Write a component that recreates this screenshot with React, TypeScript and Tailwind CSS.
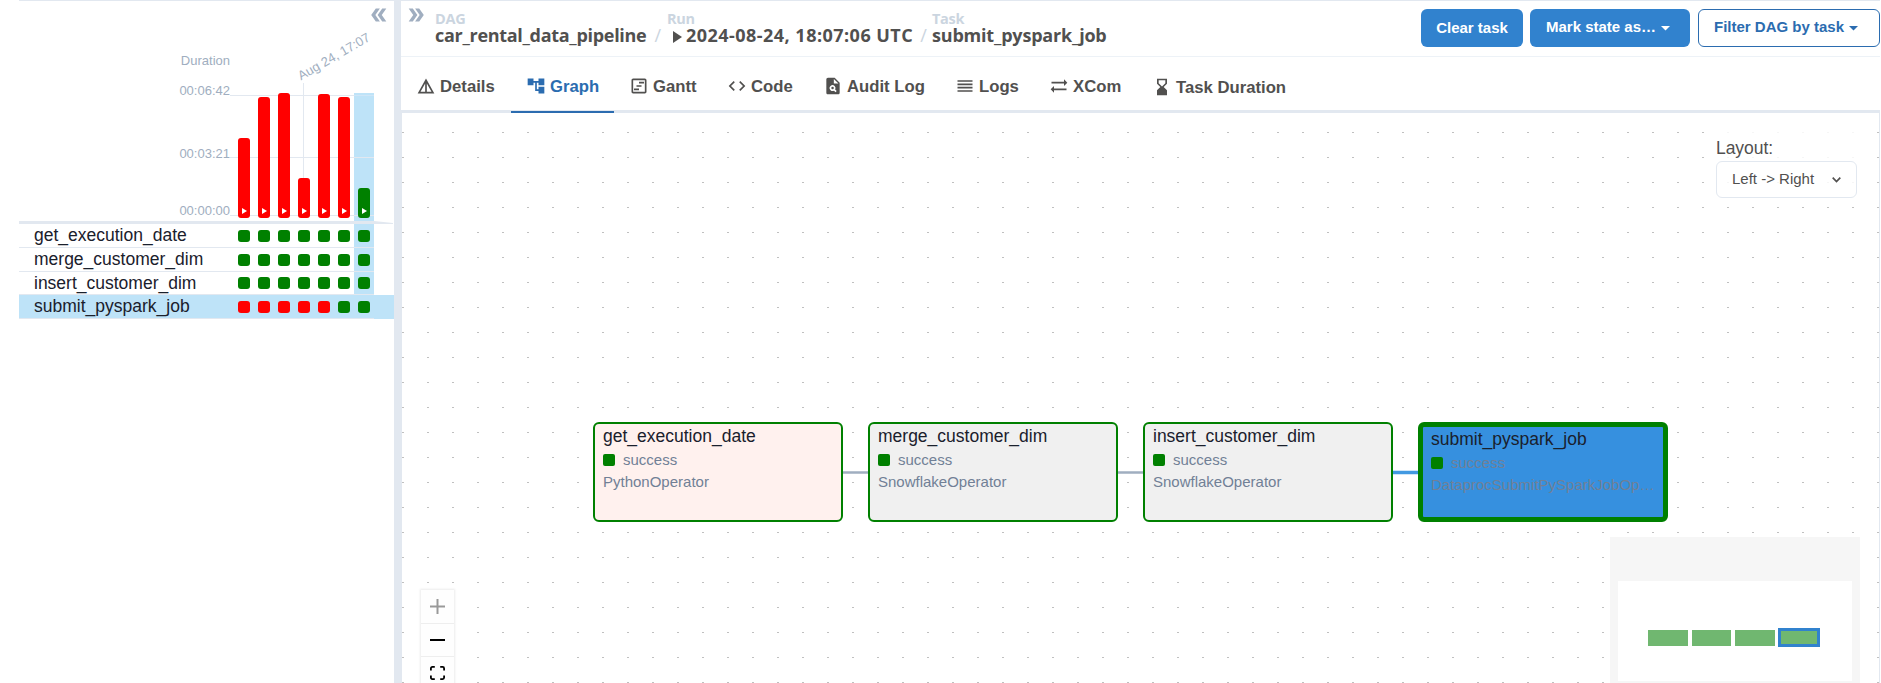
import React from "react";
import {
  MdAccountTree,
  MdCode,
  MdDetails,
  MdDoubleArrow,
  MdHourglassBottom,
  MdOutlineViewTimeline,
  MdPlagiarism,
  MdReorder,
  MdSyncAlt,
} from "react-icons/md";

const runs = [
  { height: 80, color: "bg-[#ff0000]" },
  { height: 121, color: "bg-[#ff0000]" },
  { height: 125, color: "bg-[#ff0000]" },
  { height: 40, color: "bg-[#ff0000]" },
  { height: 124, color: "bg-[#ff0000]" },
  { height: 121, color: "bg-[#ff0000]" },
  { height: 30, color: "bg-[#008000]" },
];

const tasks = [
  { name: "get_execution_date", failed: 0, row: "h-6", selected: false },
  { name: "merge_customer_dim", failed: 0, row: "h-6", selected: false },
  { name: "insert_customer_dim", failed: 0, row: "h-[23px]", selected: false },
  { name: "submit_pyspark_job", failed: 5, row: "h-6", selected: true },
];

const tabs = [
  { label: "Details", Icon: MdDetails, width: "w-[110px]" },
  { label: "Graph", Icon: MdAccountTree, width: "w-[103px]" },
  { label: "Gantt", Icon: MdOutlineViewTimeline, width: "w-[98px]" },
  { label: "Code", Icon: MdCode, width: "w-[96px]" },
  { label: "Audit Log", Icon: MdPlagiarism, width: "w-[132px]" },
  { label: "Logs", Icon: MdReorder, width: "w-[94px]" },
  { label: "XCom", Icon: MdSyncAlt, width: "w-[103px]" },
  { label: "Task Duration", Icon: MdHourglassBottom, width: "w-[142px]" },
];

const nodes = [
  { name: "get_execution_date", operator: "PythonOperator", place: "left-[191px]", fill: "bg-[#fff1ee]", selected: false },
  { name: "merge_customer_dim", operator: "SnowflakeOperator", place: "left-[466px]", fill: "bg-[#f0f0f0]", selected: false },
  { name: "insert_customer_dim", operator: "SnowflakeOperator", place: "left-[741px]", fill: "bg-[#f0f0f0]", selected: false },
  { name: "submit_pyspark_job", operator: "DataprocSubmitPySparkJobOp…", place: "left-[1016px]", fill: "bg-[#3690df]", selected: true },
];

function Caret() {
  return (
    <svg width="9" height="5" viewBox="0 0 9 5" className="ml-[5px] mt-[3px] shrink-0">
      <path d="M0 0h9L4.5 4.5z" fill="currentColor" />
    </svg>
  );
}

function DurationChart() {
  return (
    <div className="relative flex h-[220px] justify-end pr-5 text-[13px] leading-4 text-[#a0aec0]">
      <button className="absolute right-[4px] top-[3px]">
        <MdDoubleArrow className="rotate-180" size={22} />
      </button>
      <div className="flex flex-col items-end pr-[4px] pt-[52px]">
        <span>Duration</span>
        <span className="mt-[14px]">00:06:42</span>
        <span className="mt-[47px]">00:03:21</span>
        <span className="mt-[41px]">00:00:00</span>
      </div>
      <div className="relative flex h-full w-[140px]">
        <div className="absolute -left-[4px] right-0 top-[94px] h-px bg-[#e2e8f0]" />
        <div className="absolute -left-[4px] right-0 top-[156px] h-px bg-[#e2e8f0]" />
        <div className="absolute -left-[4px] right-0 top-[214px] h-px bg-[#e2e8f0]" />
        <div className="absolute left-[69px] top-[82px] h-[100px] w-px bg-[#e2e8f0]" />
        <span className="absolute left-[69px] top-[67px] origin-bottom-left -rotate-[30deg] whitespace-nowrap">
          Aug 24, 17:07
        </span>
        {runs.map((run, i) => (
          <div
            key={i}
            className={`flex w-5 flex-col items-center justify-end pb-[3px] ${i === 6 ? "mt-[92px] bg-[#bee3f8]" : ""}`}
          >
            <div
              className={`relative flex w-3 items-end justify-center rounded-[3px] pb-[4px] ${run.color}`}
              style={{ height: run.height }}
            >
              <svg width="5" height="6" viewBox="0 0 5 6" className="ml-px">
                <path d="M0 0l5 3-5 3z" fill="#fff" />
              </svg>
            </div>
          </div>
        ))}
        <div className="absolute right-0 top-[94px] h-px w-5 bg-[#cfe6f7]" />
      </div>
    </div>
  );
}

function GridPanel() {
  return (
    <aside className="ml-[19px] flex w-[375px] shrink-0 flex-col border-t border-[#e2e8f0]">
      <DurationChart />
      <svg width="375" height="3" viewBox="0 0 375 3" className="shrink-0">
        <path d="M0 0h355l19 2v1H0z" fill="#e2e8f0" />
      </svg>
      {tasks.map((task) => (
        <div
          key={task.name}
          className={`flex shrink-0 ${task.row} ${task.selected ? "bg-[#bee3f8]" : ""}`}
        >
          <div className="flex w-[355px] border-b border-[#e2e8f0]">
            <span className="w-[215px] pl-[15px] text-[17.5px] leading-[23px] text-[#1a202c]">{task.name}</span>
            {runs.map((_, i) => (
              <div
                key={i}
                className={`flex w-5 items-center justify-center ${i === 6 ? "bg-[#bee3f8]" : ""}`}
              >
                <div className={`size-3 rounded-[3px] ${i < task.failed ? "bg-[#ff0000]" : "bg-[#008000]"}`} />
              </div>
            ))}
          </div>
        </div>
      ))}
    </aside>
  );
}

function Header() {
  return (
    <header className="flex h-[56px] shrink-0 border-b border-[#edf2f7] pl-[4px] font-['Open_Sans',sans-serif] font-bold text-[#51504f]">
      <button className="mt-[3px] h-[22px] text-[#a0aec0]">
        <MdDoubleArrow size={22} />
      </button>
      <div className="ml-[8px] flex w-[232px] flex-col pt-[9px]">
        <span className="text-[14.5px] leading-[17px] tracking-[-0.3px] text-[#cbd5e0]">DAG</span>
        <span className="flex whitespace-nowrap text-[18px] leading-[16px]">
          <span className="tracking-[-0.3px]">car_rental_data_pipeline</span>
          <span className="ml-[8px] font-normal text-[#cbd5e0]">/</span>
        </span>
      </div>
      <div className="flex w-[265px] flex-col pt-[9px]">
        <span className="text-[14.5px] leading-[17px] tracking-[-0.3px] text-[#cbd5e0]">Run</span>
        <span className="flex whitespace-nowrap text-[18px] leading-[16px]">
          <svg width="9" height="12" viewBox="0 0 9 12" className="ml-[6px] mr-[4px] mt-[4px]">
            <path d="M0 0l9 6-9 6z" fill="currentColor" />
          </svg>
          <span className="tracking-[0.47px]">2024-08-24, 18:07:06 UTC</span>
          <span className="ml-[7px] font-normal text-[#cbd5e0]">/</span>
        </span>
      </div>
      <div className="flex flex-col pt-[9px]">
        <span className="text-[14.5px] leading-[17px] tracking-[-0.3px] text-[#cbd5e0]">Task</span>
        <span className="text-[18px] leading-[16px] tracking-[-0.2px]">submit_pyspark_job</span>
      </div>
      <div className="ml-auto flex gap-[7px] pt-[8px] font-['Liberation_Sans',Arial,sans-serif] text-[15px]">
        <button className="h-[38px] w-[102px] rounded-md bg-[#3182ce] text-white">Clear task</button>
        <button className="flex h-[38px] w-[160px] items-center rounded-md bg-[#3182ce] pb-[2px] pl-4 text-white">
          Mark state as…
          <Caret />
        </button>
        <button className="ml-px flex h-[38px] w-[182px] items-center rounded-md border border-[#2b6cb0] pb-[2px] pl-[15px] text-[#2b6cb0]">
          Filter DAG by task
          <Caret />
        </button>
      </div>
    </header>
  );
}

function Tabs() {
  return (
    <nav className="flex h-[56px] shrink-0 border-b-[3px] border-[#e2e8f0] text-[16.7px] font-bold text-[#51504f]">
      {tabs.map(({ label, Icon, width }) => (
        <button
          key={label}
          className={`-mb-[3px] flex items-center whitespace-nowrap pl-[15px] ${width} ${
            label === "Graph"
              ? "border-b-2 border-[#2b6cb0] pt-[4px] text-[#2b6cb0]"
              : label === "Task Duration"
                ? "pt-[4px]"
                : "pt-[2px]"
          }`}
        >
          <Icon size={20} className="shrink-0" />
          <span className="ml-[4px] pt-[2px]">{label}</span>
        </button>
      ))}
    </nav>
  );
}

function MiniMap() {
  return (
    <div className="absolute left-[1208px] top-[424px] h-[146px] w-[250px] bg-[#f6f6f6] pl-[8px] pt-[44px]">
      <div className="flex h-[100px] w-[234px] items-start gap-[4px] bg-white pl-[30px] pt-[49px]">
        <div className="h-4 w-10 bg-[#70b770]" />
        <div className="h-4 w-[39px] bg-[#70b770]" />
        <div className="h-4 w-10 bg-[#70b770]" />
        <div className="-ml-px -mt-[2px] h-[19px] w-[42px] border-[3px] border-[#3182ce] bg-[#70b770]" />
      </div>
    </div>
  );
}

function Controls() {
  return (
    <div className="absolute left-[19px] top-[477px] flex w-[33px] flex-col bg-[#fefefe] shadow-[0_0_2px_1px_rgba(0,0,0,0.08)]">
      <button className="flex h-[34px] items-center justify-center border-b border-[#eeeeee]">
        <svg width="15" height="15" viewBox="0 0 15 15">
          <path d="M7.5 0v15M0 7.5h15" stroke="#999" strokeWidth="2" />
        </svg>
      </button>
      <button className="flex h-[33px] items-center justify-center border-b border-[#eeeeee]">
        <div className="h-[2px] w-[15px] bg-black" />
      </button>
      <button className="flex h-[32px] items-center justify-center">
        <svg width="15" height="14" viewBox="0 0 15 14" fill="none" stroke="#000" strokeWidth="1.8">
          <path d="M.9 4.4V2.4Q.9.9 2.4.9h2.4M10.2.9h2.4q1.5 0 1.5 1.5v2M14.1 9.6v2q0 1.5-1.5 1.5h-2.4M4.8 13.1H2.4Q.9 13.1.9 11.6v-2" />
        </svg>
      </button>
    </div>
  );
}

function Graph() {
  return (
    <main className="relative h-[571px] overflow-hidden border-x border-[#e2e8f0]">
      <svg className="absolute left-0 top-0" width="1477" height="570">
        <defs>
          <pattern id="dots" width="25" height="25" y="19" patternUnits="userSpaceOnUse">
            <rect width="2" height="1" fill="#c0c0c0" />
          </pattern>
        </defs>
        <rect width="1477" height="570" fill="url(#dots)" />
        <path d="M441 359.5h25M716 359.5h25" stroke="#a0aec0" strokeWidth="2.5" />
        <path d="M991 359.5h25" stroke="#4299e1" strokeWidth="3.5" />
      </svg>
      {nodes.map((node) => (
        <div
          key={node.name}
          className={`absolute top-[309px] flex h-[100px] w-[250px] flex-col rounded-md border-[#008000] px-2 ${node.place} ${node.fill} ${
            node.selected ? "border-[5px]" : "border-2"
          }`}
        >
          <span className="pt-px text-[17.5px] leading-[22px] text-[#1a202c]">{node.name}</span>
          <span className="mt-px flex h-[24px] items-center text-[15px] text-[#718096]">
            <span className="mr-[8px] size-3 rounded-[2px] bg-[#008000]" />
            <span className="pt-px">success</span>
          </span>
          <span className="-mt-px whitespace-nowrap text-[15px] leading-[21px] text-[#718096]">{node.operator}</span>
        </div>
      ))}
      <div className="absolute left-[1314px] top-[15px] w-[141px] bg-white/85 pt-[9px] text-[#51504f]">
        <div className="text-[17.5px] leading-[22px] tracking-[-0.05px]">Layout:</div>
        <div className="mt-[2px] flex h-[37px] items-center rounded-md border border-[#e2e8f0] pb-px pl-[15px] text-[15px]">
          Left -&gt; Right
          <svg width="9" height="6" viewBox="0 0 9 6" className="ml-[18px] mt-[2px]" fill="none">
            <path d="M.7.7l3.8 3.8L8.3.7" stroke="currentColor" strokeWidth="1.7" />
          </svg>
        </div>
      </div>
      <MiniMap />
      <Controls />
    </main>
  );
}

export default function App() {
  return (
    <div className="flex h-[683px] w-[1881px] overflow-hidden bg-white font-['Liberation_Sans',Arial,sans-serif]">
      <GridPanel />
      <div className="w-[7px] shrink-0 bg-[#e2e8f0]" />
      <section className="flex w-[1479px] shrink-0 flex-col border-t border-[#e2e8f0]">
        <Header />
        <Tabs />
        <Graph />
      </section>
    </div>
  );
}
